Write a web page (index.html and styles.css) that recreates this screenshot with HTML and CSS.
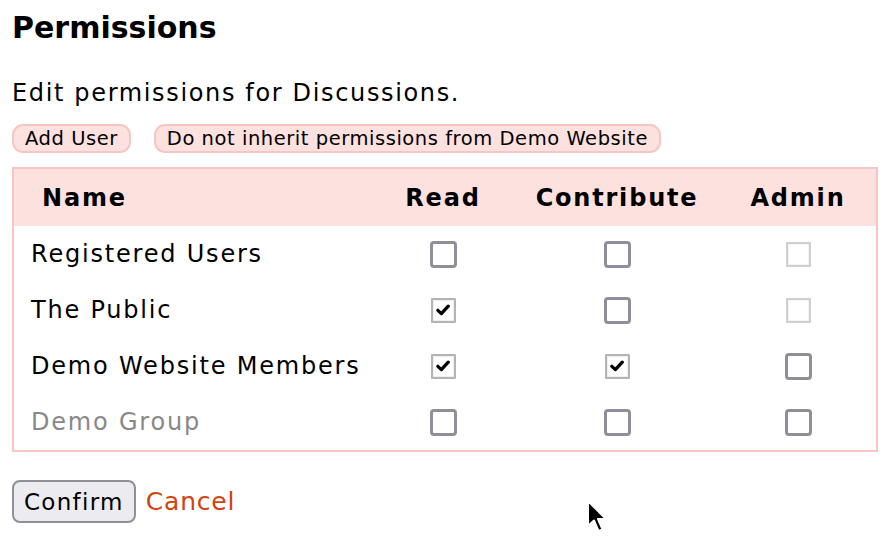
FILE: index.html
```html
<!DOCTYPE html>
<html>
<head>
<meta charset="utf-8">
<link rel="stylesheet" href="styles.css">
</head>
<body>
<div class="page">
  <h1 class="title">Permissions</h1>
  <p class="intro">Edit permissions for Discussions.</p>
  <div class="actions">
    <button class="pill">Add User</button>
    <button class="pill">Do not inherit permissions from Demo Website</button>
  </div>
  <table class="perms">
    <thead>
      <tr>
        <th class="c-name">Name</th>
        <th class="c-read">Read</th>
        <th class="c-contrib">Contribute</th>
        <th class="c-admin">Admin</th>
      </tr>
    </thead>
    <tbody>
      <tr>
        <td class="name">Registered Users</td>
        <td><span class="cb"></span></td>
        <td><span class="cb"></span></td>
        <td><span class="cb dis"></span></td>
      </tr>
      <tr>
        <td class="name">The Public</td>
        <td><span class="cb on"><svg viewBox="0 0 12 10" width="14" height="12"><path d="M1.6 5.3 L4.6 8.1 L10.5 1.7" fill="none" stroke="#000" stroke-width="2.8" stroke-linejoin="round" stroke-linecap="round"/></svg></span></td>
        <td><span class="cb"></span></td>
        <td><span class="cb dis"></span></td>
      </tr>
      <tr>
        <td class="name">Demo Website Members</td>
        <td><span class="cb on"><svg viewBox="0 0 12 10" width="14" height="12"><path d="M1.6 5.3 L4.6 8.1 L10.5 1.7" fill="none" stroke="#000" stroke-width="2.8" stroke-linejoin="round" stroke-linecap="round"/></svg></span></td>
        <td><span class="cb on"><svg viewBox="0 0 12 10" width="14" height="12"><path d="M1.6 5.3 L4.6 8.1 L10.5 1.7" fill="none" stroke="#000" stroke-width="2.8" stroke-linejoin="round" stroke-linecap="round"/></svg></span></td>
        <td><span class="cb"></span></td>
      </tr>
      <tr>
        <td class="name muted">Demo Group</td>
        <td><span class="cb"></span></td>
        <td><span class="cb"></span></td>
        <td><span class="cb"></span></td>
      </tr>
    </tbody>
  </table>
  <div class="footer">
    <button class="confirm">Confirm</button>
    <a class="cancel" href="#">Cancel</a>
  </div>
</div>
<svg class="cursor" width="22" height="36" viewBox="0 0 22 36">
  <path d="M2 2 L2 27 L8 21.5 L12.5 32 L16.5 30.3 L12 20 L20 20 Z" fill="#000" stroke="#fff" stroke-width="2" stroke-linejoin="round"/>
</svg>
</body>
</html>
```

FILE: styles.css
```css
html, body {
  margin: 0;
  padding: 0;
  background: #fff;
}
body {
  font-family: "DejaVu Sans", Verdana, sans-serif;
  color: #000;
  position: relative;
  width: 892px;
  height: 542px;
  overflow: hidden;
}
.page {
  padding: 8px 12px 0 12px;
}
.title {
  font-size: 30px;
  font-weight: bold;
  margin: 0;
  line-height: 40px;
}
.intro {
  font-size: 24px;
  letter-spacing: 1.65px;
  margin: 30px 0 0 0;
  line-height: 30px;
}
.actions {
  display: flex;
  gap: 23px;
  margin-top: 16px;
}
.pill {
  font-family: inherit;
  font-size: 19.5px;
  letter-spacing: 0.55px;
  background: #fde1df;
  border: 2px solid #f8c6c2;
  border-radius: 11px;
  padding: 0 11px;
  height: 29px;
  line-height: 25px;
  color: #000;
}
.perms {
  margin-top: 14px;
  width: 866px;
  border-collapse: collapse;
  border: 2px solid #f8c6c2;
  table-layout: fixed;
}
.perms th {
  background: #fde1df;
  font-size: 24px;
  font-weight: bold;
  letter-spacing: 1.8px;
  height: 57px;
  padding: 0;
  text-align: center;
}
.perms th.c-name {
  text-align: left;
  padding-left: 28px;
  width: 330px;
}
.perms th.c-read { width: 142px; }
.perms th.c-contrib { width: 206px; }
.perms td {
  height: 56px;
  padding: 0;
  text-align: center;
  vertical-align: middle;
}
.perms td.name {
  text-align: left;
  padding-left: 17px;
  font-size: 24px;
  letter-spacing: 1.8px;
}
.perms td.muted {
  color: #888;
}
.cb {
  display: inline-flex;
  align-items: center;
  justify-content: center;
  box-sizing: border-box;
  width: 27px;
  height: 27px;
  border: 3px solid #8f8f9a;
  border-radius: 4px;
  background: #fff;
  vertical-align: middle;
}
.cb.on, .cb.dis {
  width: 25px;
  height: 25px;
  border: 2px solid #b4b4b4;
  border-radius: 1px;
  box-shadow: inset 0 0 0 1px #eeeeee;
}
.cb.dis {
  border-color: #cfcfcf;
  box-shadow: inset 0 0 0 1px #f4f4f4;
}
.footer {
  display: flex;
  align-items: center;
  gap: 10px;
  margin-top: 28px;
}
.confirm {
  font-family: inherit;
  font-size: 23px;
  letter-spacing: 1.3px;
  background: #ececf0;
  border: 2px solid #8f8f99;
  border-radius: 8px;
  height: 43px;
  padding: 0 10px;
  color: #000;
}
.cancel {
  font-size: 25px;
  letter-spacing: 0.8px;
  color: #d2430e;
  text-decoration: none;
}
.cursor {
  position: absolute;
  left: 586px;
  top: 499px;
}
```
